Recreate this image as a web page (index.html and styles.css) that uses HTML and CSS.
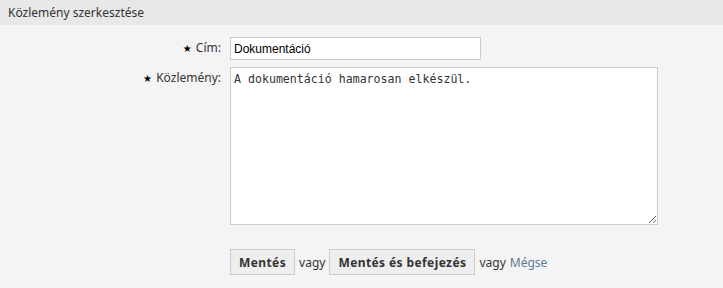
FILE: index.html
```html
<!DOCTYPE html>
<html lang="hu">
  <head>
    <meta charset="UTF-8" />
    <meta name="viewport" content="width=device-width, initial-scale=1.0" />
    <title>Közlemény szerkesztése</title>
    <link rel="stylesheet" href="styles.css">
  </head>
  <body>
    <div class="widget">
      <div class="widget-header">
        <h2>Közlemény szerkesztése</h2>
      </div>

      <form class="edit-form">
        <div class="field">
          <label for="title"><span class="mandatory">★</span> Cím:</label>
          <input type="text" id="title" name="title" value="Dokumentáció" />
        </div>

        <div class="field">
          <label for="message"><span class="mandatory">★</span> Közlemény:</label>
          <textarea id="message" name="message">A dokumentáció hamarosan elkészül.</textarea>
        </div>

        <div class="actions">
          <button type="submit" class="btn">Mentés</button>
          <span class="or">vagy</span>
          <button type="submit" class="btn">Mentés és befejezés</button>
          <span class="or">vagy</span>
          <a href="#" class="cancel">Mégse</a>
        </div>
      </form>
    </div>
  </body>
</html>
```

FILE: styles.css
```css
html {
  box-sizing: border-box;
  font-family: "Noto Sans", "DejaVu Sans", sans-serif;
  font-size: 12px;
}

*,
*:before,
*:after {
  box-sizing: inherit;
}

body {
  margin: 0;
  padding: 0;
  background: #f4f4f4;
  color: #333;
  overflow: hidden;
}

/* cabecera */
.widget-header {
  background: #e8e8e8;
  height: 25px;
  padding: 0 8px;
  display: flex;
  align-items: center;
}

.widget-header h2 {
  margin: 0;
  font-size: 12px;
  font-weight: normal;
  color: #333;
}

/* formulario */
.edit-form {
  padding-top: 12px;
}

.field {
  display: flex;
  align-items: flex-start;
  margin-bottom: 7px;
}

.field label {
  width: 221px;
  text-align: right;
  line-height: 22px;
  margin-right: 9px;
  color: #333;
}

.mandatory {
  font-size: 10px;
  color: #000;
  margin-right: 1px;
}

.field input[type="text"] {
  width: 251px;
  height: 23px;
  border: 1px solid #ccc;
  background: #fff;
  padding: 0 3px;
  font-family: "Liberation Sans", Arial, sans-serif;
  font-size: 12px;
  color: #000;
}

.field textarea {
  width: 428px;
  height: 158px;
  border: 1px solid #ccc;
  background: #fff;
  padding: 4px 3px;
  font-family: "DejaVu Sans Mono", monospace;
  font-size: 11.6px;
  color: #333;
  margin: 0;
}

.actions {
  display: flex;
  align-items: center;
  padding-left: 230px;
  margin-top: 24px;
  gap: 4px;
}

.btn {
  height: 26px;
  padding: 0 8px;
  border: 1px solid #ccc;
  background: #eee;
  font-family: "Noto Sans", "DejaVu Sans", sans-serif;
  font-size: 12px;
  font-weight: bold;
  letter-spacing: 0.4px;
  color: #333;
  cursor: pointer;
}

.or {
  color: #333;
}

.cancel {
  color: #5a7b98;
  text-decoration: none;
}
```
